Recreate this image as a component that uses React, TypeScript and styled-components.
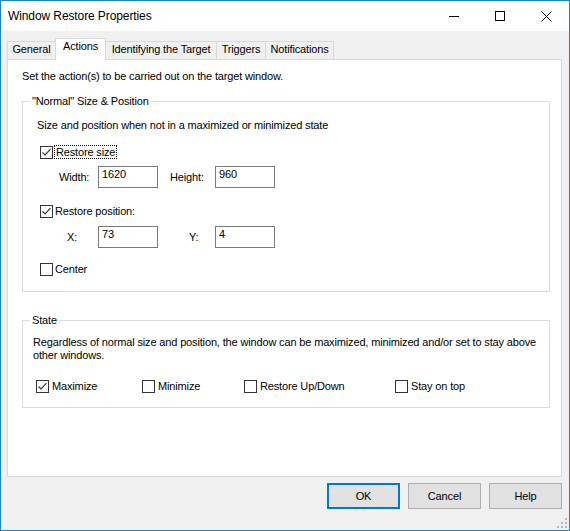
import React from 'react';
import styled, { createGlobalStyle } from 'styled-components';

const GlobalStyle = createGlobalStyle`
  html, body {
    margin: 0;
    padding: 0;
    background: #ffffff;
  }
`;

const Window = styled.div`
  position: relative;
  width: 570px;
  height: 531px;
  box-sizing: border-box;
  border: 1px solid #1883d7;
  display: flex;
  flex-direction: column;
  background: #f0f0f0;
  font-family: "Liberation Sans", Arial, sans-serif;
  font-size: 11px;
  letter-spacing: -0.15px;
  line-height: 13px;
  color: #000;
`;

const TitleBar = styled.div`
  height: 30px;
  flex: none;
  display: flex;
  align-items: center;
  background: #ffffff;
`;

const Title = styled.div`
  flex: 1;
  padding-left: 7px;
  font-size: 12px;
  letter-spacing: -0.1px;
  color: #000;
`;

const TitleButton = styled.div`
  width: 46px;
  height: 30px;
  display: flex;
  align-items: center;
  justify-content: center;
`;

const Body = styled.div`
  flex: 1;
  display: flex;
  flex-direction: column;
  padding: 7px 7px 21px 6px;
  min-height: 0;
`;

const TabRow = styled.div`
  height: 21px;
  flex: none;
  display: flex;
  align-items: flex-end;
`;

const Tab = styled.div<{ $width: number; $active?: boolean }>`
  position: relative;
  box-sizing: border-box;
  width: ${({ $width }) => $width}px;
  height: ${({ $active }) => ($active ? 22 : 18)}px;
  margin-bottom: ${({ $active }) => ($active ? -1 : 0)}px;
  margin-left: -1px;
  border: 1px solid #d9d9d9;
  border-bottom: none;
  background: ${({ $active }) => ($active ? '#ffffff' : '#f0f0f0')};
  z-index: ${({ $active }) => ($active ? 2 : 1)};
  display: flex;
  justify-content: center;
  padding-top: 1px;

  &:first-child {
    margin-left: 0;
  }
`;

const Panel = styled.div`
  flex: 1;
  box-sizing: border-box;
  border: 1px solid #d9d9d9;
  background: #ffffff;
  padding: 10px 11px 0 14px;
`;

const GroupBox = styled.fieldset<{ $top: number; $bottom: number }>`
  margin: ${({ $top }) => $top}px 0 0 0;
  padding: 0 0 ${({ $bottom }) => $bottom}px 0;
  border: 1px solid #dcdcdc;
  min-width: 0;
`;

const Legend = styled.legend`
  margin-left: 7px;
  padding: 0 2px;
  line-height: 13px;
`;

const GroupContent = styled.div<{ $inset: number; $top: number }>`
  padding: ${({ $top }) => $top}px 0 0 ${({ $inset }) => $inset}px;
  display: flex;
  flex-direction: column;
`;

const CheckRow = styled.div<{ $top: number }>`
  margin-top: ${({ $top }) => $top}px;
  margin-left: 3px;
  height: 16px;
  display: flex;
  align-items: center;
`;

const CheckGrid = styled.div`
  margin-top: 16px;
  margin-left: 3px;
  display: grid;
  grid-template-columns: 106px 102px 151px auto;
  height: 16px;
  align-items: center;
`;

const CheckItem = styled.div`
  display: flex;
  align-items: center;
`;

const Box = styled.div`
  width: 13px;
  height: 13px;
  box-sizing: border-box;
  border: 1px solid #333333;
  background: #ffffff;
  flex: none;
  display: flex;
`;

const CheckLabel = styled.span<{ $focused?: boolean; $gap?: number }>`
  margin-left: ${({ $focused, $gap = 2 }) => ($focused ? $gap - 1 : $gap)}px;
  padding: 0 ${({ $focused }) => ($focused ? 1 : 0)}px;
  border: ${({ $focused }) => ($focused ? '1px dotted #000' : 'none')};
  line-height: 12px;
`;

const FieldRow = styled.div<{ $top: number }>`
  margin-top: ${({ $top }) => $top}px;
  display: grid;
  grid-template-columns: 61px 60px 57px 60px;
  align-items: center;
  height: 22px;
`;

const FieldLabel = styled.span<{ $pad: number }>`
  padding-left: ${({ $pad }) => $pad}px;
`;

const TextBox = styled.div`
  box-sizing: border-box;
  height: 22px;
  border: 1px solid #7a7a7a;
  background: #ffffff;
  padding: 1px 3px;
  line-height: 13px;
`;

const Note = styled.div`
  line-height: 13px;
`;

const ButtonRow = styled.div`
  flex: none;
  margin-top: 6px;
  display: flex;
  justify-content: flex-end;
  gap: 8px;
`;

const Button = styled.div<{ $primary?: boolean }>`
  width: 73px;
  height: 26px;
  box-sizing: border-box;
  background: #e1e1e1;
  border: ${({ $primary }) => ($primary ? '2px solid #0078d7' : '1px solid #adadad')};
  display: flex;
  align-items: center;
  justify-content: center;
`;

const Grip = styled.svg`
  position: absolute;
  right: 1px;
  bottom: 1px;
`;

const CheckBox: React.FC<{ checked?: boolean }> = ({ checked }) => (
  <Box>
    {checked && (
      <svg width="11" height="11" viewBox="0 0 11 11">
        <polyline points="1.5,5.5 4,8 9.5,2.2" fill="none" stroke="#333" strokeWidth="1.1" />
      </svg>
    )}
  </Box>
);

const App: React.FC = () => {
  const tabs = [
    { label: 'General', width: 49 },
    { label: 'Actions', width: 51 },
    { label: 'Identifying the Target', width: 112 },
    { label: 'Triggers', width: 50 },
    { label: 'Notifications', width: 69 },
  ];

  const states = [
    { label: 'Maximize', checked: true },
    { label: 'Minimize', checked: false },
    { label: 'Restore Up/Down', checked: false },
    { label: 'Stay on top', checked: false },
  ];

  return (
    <>
      <GlobalStyle />
      <Window>
        <TitleBar>
          <Title>Window Restore Properties</Title>
          <TitleButton>
            <svg width="10" height="10" viewBox="0 0 10 10">
              <line x1="0" y1="5.5" x2="10" y2="5.5" stroke="#000" strokeWidth="1" />
            </svg>
          </TitleButton>
          <TitleButton>
            <svg width="10" height="10" viewBox="0 0 10 10">
              <rect x="0.5" y="0.5" width="9" height="9" fill="none" stroke="#000" strokeWidth="1" />
            </svg>
          </TitleButton>
          <TitleButton>
            <svg width="11" height="11" viewBox="0 0 11 11">
              <path d="M0.5 0.5 L10.5 10.5 M10.5 0.5 L0.5 10.5" stroke="#000" strokeWidth="1" />
            </svg>
          </TitleButton>
        </TitleBar>

        <Body>
          <TabRow>
            {tabs.map((t) => (
              <Tab key={t.label} $width={t.width} $active={t.label === 'Actions'}>
                {t.label}
              </Tab>
            ))}
          </TabRow>

          <Panel>
            <Note>Set the action(s) to be carried out on the target window.</Note>

            <GroupBox $top={12} $bottom={14}>
              <Legend>"Normal" Size &amp; Position</Legend>
              <GroupContent $inset={14} $top={11}>
                <Note>Size and position when not in a maximized or minimized state</Note>

                <CheckRow $top={12}>
                  <CheckBox checked />
                  <CheckLabel $focused>Restore size</CheckLabel>
                </CheckRow>

                <FieldRow $top={6}>
                  <FieldLabel $pad={22}>Width:</FieldLabel>
                  <TextBox>1620</TextBox>
                  <FieldLabel $pad={12}>Height:</FieldLabel>
                  <TextBox>960</TextBox>
                </FieldRow>

                <CheckRow $top={15}>
                  <CheckBox checked />
                  <CheckLabel>Restore position:</CheckLabel>
                </CheckRow>

                <FieldRow $top={7}>
                  <FieldLabel $pad={30}>X:</FieldLabel>
                  <TextBox>73</TextBox>
                  <FieldLabel $pad={31}>Y:</FieldLabel>
                  <TextBox>4</TextBox>
                </FieldRow>

                <CheckRow $top={13}>
                  <CheckBox />
                  <CheckLabel>Center</CheckLabel>
                </CheckRow>
              </GroupContent>
            </GroupBox>

            <GroupBox $top={22} $bottom={13}>
              <Legend>State</Legend>
              <GroupContent $inset={10} $top={9}>
                <Note>
                  Regardless of normal size and position, the window can be maximized, minimized and/or set to stay above
                  <br />
                  other windows.
                </Note>
                <CheckGrid>
                  {states.map((s) => (
                    <CheckItem key={s.label}>
                      <CheckBox checked={s.checked} />
                      <CheckLabel $gap={3}>{s.label}</CheckLabel>
                    </CheckItem>
                  ))}
                </CheckGrid>
              </GroupContent>
            </GroupBox>
          </Panel>

          <ButtonRow>
            <Button $primary>OK</Button>
            <Button>Cancel</Button>
            <Button>Help</Button>
          </ButtonRow>
        </Body>

        <Grip width="12" height="12" viewBox="0 0 12 12">
          {[
            [9, 1],
            [9, 5],
            [5, 5],
            [9, 9],
            [5, 9],
            [1, 9],
          ].map(([x, y]) => (
            <rect key={`${x}-${y}`} x={x} y={y} width="2" height="2" fill="#b8b8b8" />
          ))}
        </Grip>
      </Window>
    </>
  );
};

export default App;
